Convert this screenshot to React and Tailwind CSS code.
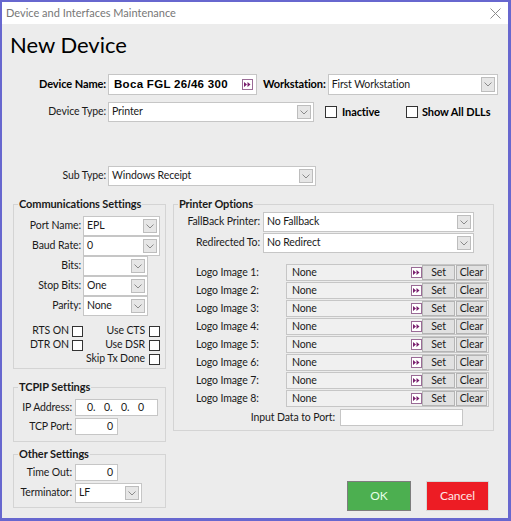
import React from 'react';

const Chevron = () => (
  <svg width="8" height="5" viewBox="0 0 8 5">
    <path d="M0.5 0.5 L4 4 L7.5 0.5" fill="none" stroke="#8a8a8a" strokeWidth="1" />
  </svg>
);

const PickIcon = ({ className = '' }) => (
  <span className={`w-[11px] h-[11px] shrink-0 bg-white border border-[#9a6b96] flex items-center justify-center ${className}`}>
    <svg width="7" height="5" viewBox="0 0 7 5">
      <path d="M0 0 L3 2.5 L0 5 Z M3.5 0 L6.5 2.5 L3.5 5 Z" fill="#7a1f6e" />
    </svg>
  </span>
);

const Select = ({ className = '', value }) => (
  <div className={`flex items-center shrink-0 bg-white border border-[#c6c6c6] ${className}`}>
    <span className="flex-1 pl-[3px] truncate">{value}</span>
    <div className="w-[14px] self-stretch my-[2px] mr-[2px] bg-[#e6e6e6] border border-[#bdbdbd] flex items-center justify-center">
      <Chevron />
    </div>
  </div>
);

const Field = ({ className = '', children }) => (
  <div className={`flex items-center shrink-0 bg-white border border-[#c6c6c6] ${className}`}>{children}</div>
);

const Box = ({ className = '' }) => (
  <span className={`block w-[11px] h-[11px] border border-[#333] bg-white shrink-0 ${className}`} />
);

const Group = ({ title, className = '', children }) => (
  <div className={`border border-[#d4d4d4] ${className}`}>
    <div className="-mt-[8px] ml-[4px] w-fit bg-[#ececec] px-[1px] font-bold leading-[14px] text-[11px] whitespace-nowrap">{title}</div>
    {children}
  </div>
);

export default function App() {
  const logos = [1, 2, 3, 4, 5, 6, 7, 8];
  return (
    <div className="w-[511px] h-[521px] border-2 border-r-[3px] border-b-[3px] border-[#6767cf] flex flex-col text-[10.5px] tracking-[-0.1px] whitespace-nowrap text-[#1a1a1a] [font-family:Lato,'Noto_Sans',sans-serif]">
      {/* title bar */}
      <div className="h-[22px] bg-white flex items-center justify-between pl-[4px] pr-[7px] shrink-0">
        <span className="text-[#777] text-[11px] tracking-normal">Device and Interfaces Maintenance</span>
        <svg width="11" height="11" viewBox="0 0 11 11">
          <path d="M0.5 0.5 L10.5 10.5 M10.5 0.5 L0.5 10.5" stroke="#8c8c8c" strokeWidth="1" />
        </svg>
      </div>

      <div className="flex-1 bg-[#ececec] flex flex-col">
        <div className="pl-[8px] mt-[7px] text-[22px] tracking-normal leading-[28px] text-black">New Device</div>

        {/* device name row */}
        <div className="mt-[15px] flex items-center h-[21px]">
          <span className="w-[104px] text-right font-bold text-[11px] text-black">Device Name:</span>
          <Field className="ml-[2px] w-[149px] h-[21px]">
            <span className="flex-1 pl-[5px] font-bold text-[11.5px] tracking-[0.3px] [font-family:'Liberation_Sans',sans-serif] text-black">Boca FGL 26/46 300</span>
            <PickIcon className="mr-[3px]" />
          </Field>
          <span className="ml-[6px] font-bold text-[11px] text-black">Workstation:</span>
          <Select className="ml-[2px] w-[170px] h-[21px]" value="First Workstation" />
        </div>

        {/* device type row */}
        <div className="mt-[7px] flex items-center h-[20px]">
          <span className="w-[104px] text-right">Device Type:</span>
          <Select className="ml-[2px] w-[206px] h-[20px]" value="Printer" />
          <Box className="ml-[11px] w-[12px] h-[12px]" />
          <span className="ml-[5px] w-[64px] font-bold text-[11px] text-black">Inactive</span>
          <Box className="w-[12px] h-[12px]" />
          <span className="ml-[4px] font-bold text-[11px] text-black">Show All DLLs</span>
        </div>

        {/* sub type row */}
        <div className="mt-[44px] flex items-center h-[20px]">
          <span className="w-[104px] text-right">Sub Type:</span>
          <Select className="ml-[2px] w-[208px] h-[20px]" value="Windows Receipt" />
        </div>

        <div className="mt-[18px] pl-[11px] flex items-start">
          {/* left column */}
          <div className="w-[153px] flex flex-col">
            <Group title="Communications Settings" className="h-[165px]">
              <div className="mt-[5px] flex flex-col">
                {[
                  ['Port Name:', 'EPL', 'w-[77px]'],
                  ['Baud Rate:', '0', 'w-[77px]'],
                  ['Bits:', '', 'w-[65px]'],
                  ['Stop Bits:', 'One', 'w-[65px]'],
                  ['Parity:', 'None', 'w-[65px]'],
                ].map(([l, v, w]) => (
                  <div key={l} className="flex items-center h-[20px]">
                    <span className="w-[67px] text-right">{l}</span>
                    <Select className={`ml-[2px] h-[20px] ${w}`} value={v} />
                  </div>
                ))}
              </div>
              <div className="mt-[8px] flex flex-col">
                <div className="flex items-center h-[14px]">
                  <div className="w-[70px] flex items-center justify-end gap-[3px] pr-[1px]"><span>RTS ON</span><Box /></div>
                  <div className="w-[77px] flex items-center justify-end gap-[4px] pr-[1px]"><span>Use CTS</span><Box /></div>
                </div>
                <div className="flex items-center h-[14px]">
                  <div className="w-[70px] flex items-center justify-end gap-[3px] pr-[1px]"><span>DTR ON</span><Box /></div>
                  <div className="w-[77px] flex items-center justify-end gap-[4px] pr-[1px]"><span>Use DSR</span><Box /></div>
                </div>
                <div className="flex items-center h-[14px]">
                  <div className="w-[70px]" />
                  <div className="w-[77px] flex items-center justify-end gap-[4px] pr-[1px]"><span>Skip Tx Done</span><Box /></div>
                </div>
              </div>
            </Group>

            <Group title="TCPIP Settings" className="mt-[18px] h-[55px]">
              <div className="mt-[5px] flex items-center h-[17px]">
                <span className="w-[58px] text-right">IP Address:</span>
                <Field className="ml-[3px] w-[83px] h-[17px] pl-[11px]">
                  <span className="w-[17px]">0.</span>
                  <span className="w-[17px]">0.</span>
                  <span className="w-[17px]">0.</span>
                  <span className="w-[17px]">0</span>
                </Field>
              </div>
              <div className="mt-[2px] flex items-center h-[17px]">
                <span className="w-[58px] text-right">TCP Port:</span>
                <Field className="ml-[3px] w-[43px] h-[17px] justify-end pr-[4px]">0</Field>
              </div>
            </Group>

            <Group title="Other Settings" className="mt-[12px] h-[54px]">
              <div className="mt-[3px] flex items-center h-[17px]">
                <span className="w-[58px] text-right">Time Out:</span>
                <Field className="ml-[3px] w-[43px] h-[17px] justify-end pr-[4px]">0</Field>
              </div>
              <div className="mt-[2px] flex items-center h-[20px]">
                <span className="w-[58px] text-right">Terminator:</span>
                <Select className="ml-[3px] w-[67px] h-[20px]" value="LF" />
              </div>
            </Group>
          </div>

          {/* right column */}
          <div className="ml-[7px] w-[321px] flex flex-col">
            <Group title="Printer Options" className="h-[227px]">
              <div className="mt-[1px] flex items-center h-[20px]">
                <span className="w-[86px] text-right">FallBack Printer:</span>
                <Select className="ml-[3px] w-[211px] h-[20px]" value="No Fallback" />
              </div>
              <div className="mt-[1px] flex items-center h-[20px]">
                <span className="w-[86px] text-right">Redirected To:</span>
                <Select className="ml-[3px] w-[211px] h-[20px]" value="No Redirect" />
              </div>
              <div className="mt-[11px] flex flex-col gap-[1px]">
                {logos.map((n) => (
                  <div key={n} className="flex items-center h-[17px]">
                    <span className="w-[112px] pl-[22px]">Logo Image {n}:</span>
                    <div className="w-[203px] h-[17px] flex items-center bg-[#f0f0f0] border border-[#c6c6c6]">
                      <span className="flex-1 pl-[5px]">None</span>
                      <PickIcon />
                      <span className="w-[33px] h-[15px] bg-[#e1e1e1] border border-[#b4b4b4] flex items-center justify-center">Set</span>
                      <span className="ml-[1px] mr-[1px] w-[31px] h-[15px] bg-[#e1e1e1] border border-[#b4b4b4] flex items-center justify-center">Clear</span>
                    </div>
                  </div>
                ))}
              </div>
              <div className="mt-[2px] flex items-center h-[17px]">
                <span className="w-[161px] text-right">Input Data to Port:</span>
                <Field className="ml-[5px] w-[123px] h-[17px]" />
              </div>
            </Group>

            <div className="mt-[50px] ml-[174px] flex">
              <div className="w-[64px] h-[30px] bg-[#4caf50] border border-[#7d7d7d] flex items-center justify-center text-[12px] text-[#e6ffe6]">OK</div>
              <div className="ml-[15px] w-[63px] h-[30px] bg-[#ed1c24] border border-[#d6d6d6] flex items-center justify-center text-[12px] text-[#ffe6e6]">Cancel</div>
            </div>
          </div>
        </div>
      </div>
    </div>
  );
}
